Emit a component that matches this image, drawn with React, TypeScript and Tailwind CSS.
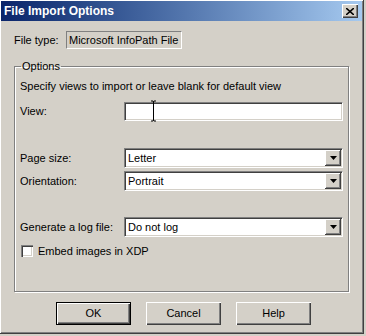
import React from 'react';

const sunken =
  'border border-t-[#808080] border-l-[#808080] border-r-white border-b-white shadow-[inset_1px_1px_0_#404040,inset_-1px_-1px_0_#d4d0c8]';

const Select: React.FC<{ value: string }> = ({ value }) => (
  <div className={`flex h-[20px] w-[219px] items-stretch bg-white p-[1px] ${sunken}`}>
    <div className="flex flex-1 items-center pl-[2px] text-[11px] leading-none">{value}</div>
    <div className="flex w-[16px] items-center justify-center bg-[#d4d0c8] shadow-[inset_-1px_-1px_0_#404040,inset_1px_1px_0_#fff,inset_-2px_-2px_0_#808080]">
      <svg width="7" height="4" viewBox="0 0 7 4">
        <path d="M0 0h7L3.5 4z" fill="#000" />
      </svg>
    </div>
  </div>
);

const Button: React.FC<{ label: string; primary?: boolean }> = ({ label, primary }) => (
  <button
    className={`flex h-[23px] w-[75px] items-center justify-center bg-[#d4d0c8] text-[11px] text-black ${
      primary
        ? 'border border-black shadow-[inset_1px_1px_0_#fff,inset_-1px_-1px_0_#404040,inset_-2px_-2px_0_#808080]'
        : 'shadow-[inset_1px_1px_0_#fff,inset_-1px_-1px_0_#404040,inset_-2px_-2px_0_#808080]'
    }`}
  >
    {label}
  </button>
);

const Row: React.FC<{ label: string; children: React.ReactNode; className?: string }> = ({
  label,
  children,
  className = '',
}) => (
  <div className={`flex items-center ${className}`}>
    <div className="w-[104px] text-[11px]">{label}</div>
    {children}
  </div>
);

export default function App() {
  return (
    <div className="h-[336px] w-[366px] bg-[#d4d0c8] font-['Liberation_Sans',Arial,sans-serif] text-black">
      <div className="flex h-[334px] w-[364px] flex-col border-r border-b border-[#404040] bg-[#d4d0c8] shadow-[inset_1px_1px_0_#fff,inset_-1px_-1px_0_#808080]">
        {/* title bar */}
        <div className="mx-[1px] mt-[1px] flex h-[20px] items-center justify-between bg-gradient-to-r from-[#0a246a] to-[#a6caf0] pl-[3px] pr-[4px]">
          <span className="text-[12px] font-bold leading-none text-white">File Import Options</span>
          <div className="flex h-[14px] w-[16px] items-center justify-center bg-[#d4d0c8] shadow-[inset_1px_1px_0_#fff,inset_-1px_-1px_0_#404040,inset_-2px_-2px_0_#808080]">
            <svg width="8" height="7" viewBox="0 0 8 7">
              <path d="M0 0l8 7M8 0L0 7" stroke="#000" strokeWidth="1.6" />
            </svg>
          </div>
        </div>

        {/* file type */}
        <div className="mt-[10px] flex items-center pl-[14px]">
          <span className="w-[52px] text-[11px]">File type:</span>
          <div className="flex h-[18px] w-[116px] items-center whitespace-nowrap overflow-hidden border border-t-[#808080] border-l-[#808080] border-r-white border-b-white pl-[2px] text-[11px]">
            Microsoft InfoPath File
          </div>
        </div>

        {/* options group */}
        <fieldset className="mx-[14px] mt-[10px] h-[233px] border border-[#808080] px-[5px] shadow-[inset_1px_1px_0_#fff,1px_1px_0_#fff]">
          <legend className="ml-[1px] px-[1px] text-[11px] leading-[14px]">Options</legend>
          <div className="mt-[6px] text-[11px] leading-[14px]">
            Specify views to import or leave blank for default view
          </div>
          <Row label="View:" className="mt-[9px]">
            <div className={`relative h-[19px] w-[219px] bg-white ${sunken}`}>
              <svg className="absolute left-[25px] top-[-3px]" width="7" height="22" viewBox="0 0 7 22">
                <path d="M1 1h2l0.5 1 0.5-1h2M3.5 2v18M1 21h2l0.5-1 0.5 1h2" stroke="#000" fill="none" strokeWidth="1" />
              </svg>
            </div>
          </Row>
          <Row label="Page size:" className="mt-[27px]">
            <Select value="Letter" />
          </Row>
          <Row label="Orientation:" className="mt-[3px]">
            <Select value="Portrait" />
          </Row>
          <Row label="Generate a log file:" className="mt-[26px]">
            <Select value="Do not log" />
          </Row>
          <div className="mt-[6px] flex items-center">
            <div className="ml-[1px] h-[12px] w-[12px] bg-white shadow-[inset_1px_1px_0_#808080,inset_2px_2px_0_#404040,inset_-1px_-1px_0_#fff,inset_-2px_-2px_0_#d4d0c8]" />
            <span className="ml-[5px] text-[11px]">Embed images in XDP</span>
          </div>
        </fieldset>

        {/* buttons */}
        <div className="mt-[10px] flex pl-[56px] gap-[15px]">
          <Button label="OK" primary />
          <Button label="Cancel" />
          <Button label="Help" />
        </div>
      </div>
    </div>
  );
}
